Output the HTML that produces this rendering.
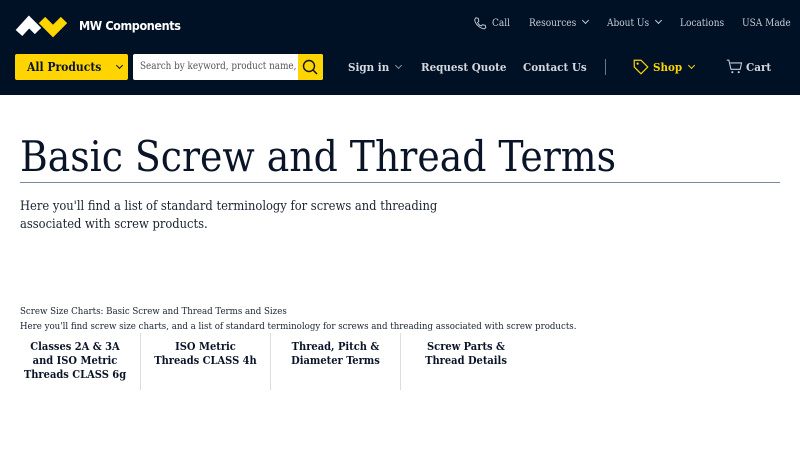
<!DOCTYPE html>
<html><head><meta charset="utf-8"><style>
*{margin:0;padding:0;box-sizing:border-box}
body{width:800px;height:450px;overflow:hidden;background:#fff;font-family:"DejaVu Serif",serif;font-stretch:condensed;color:#0a1428}
.hdr{position:absolute;left:0;top:0;width:800px;height:95px;background:#001025}
.t{position:absolute;white-space:nowrap}
.top{color:#c9ced6;font-size:10px;top:18px}
.nav{color:#d5d9df;font-size:11.5px;font-weight:bold;top:60px}
.chev{display:inline-block;width:5px;height:5px;border-right:1px solid currentColor;border-bottom:1px solid currentColor;transform:rotate(45deg);margin-left:7px;position:relative;top:-3px}
</style></head><body>
<div class="hdr">
<svg class="t" style="left:0;top:0" width="80" height="45"><polyline points="19,33 29,22 38,31" fill="none" stroke="#fff" stroke-width="9" stroke-linejoin="miter"/><polyline points="42,20 53,31 64,20" fill="none" stroke="#ffd500" stroke-width="9"/></svg>
<div class="t" style="left:79px;top:18px;color:#fff;font-family:'DejaVu Sans',sans-serif;font-weight:bold;font-size:12.5px;letter-spacing:-0.4px">MW Components</div>
<svg class="t" style="left:473px;top:16px" width="14" height="14" viewBox="0 0 24 24"><path d="M5 3l4 1 1 5-2 2c1 3 3 5 6 6l2-2 5 1 1 4-3 2C11 21 3 13 3 6z" fill="none" stroke="#c9ced6" stroke-width="1.6"/></svg>
<div class="t top" style="left:492px">Call</div>
<div class="t top" style="left:529px">Resources<span class="chev"></span></div>
<div class="t top" style="left:607px">About Us<span class="chev"></span></div>
<div class="t top" style="left:680px">Locations</div>
<div class="t top" style="left:742px">USA Made</div>
<div class="t" style="left:15px;top:54px;width:113px;height:26px;background:#ffd500;border-radius:2px;font-weight:bold;font-size:12px;color:#0a1428;padding:6px 0 0 12px">All Products<span class="chev" style="margin-left:16px"></span></div>
<div class="t" style="left:133px;top:54px;width:190px;height:26px;background:#fff;border-radius:2px;overflow:hidden;font-size:9.8px;color:#555;padding:7px 0 0 7px">Search by keyword, product name, c</div>
<div class="t" style="left:298px;top:54px;width:25px;height:26px;background:#ffd500;border-radius:0 2px 2px 0"><svg width="25" height="26"><circle cx="11" cy="12" r="5.5" fill="none" stroke="#0a1428" stroke-width="1.4"/><line x1="15" y1="16" x2="19" y2="20" stroke="#0a1428" stroke-width="1.5"/></svg></div>
<div class="t nav" style="left:348px">Sign in<span class="chev" style="color:#8a93a0"></span></div>
<div class="t nav" style="left:421px">Request Quote</div>
<div class="t nav" style="left:523px">Contact Us</div>
<div class="t" style="left:605px;top:59px;width:1px;height:16px;background:#6b7585"></div>
<svg class="t" style="left:632px;top:58px" width="18" height="18" viewBox="0 0 24 24"><path d="M3 3h9l9 9-9 9-9-9z" fill="none" stroke="#ffd500" stroke-width="1.6"/><circle cx="7.5" cy="7.5" r="1.5" fill="#ffd500"/></svg>
<div class="t nav" style="left:653px;color:#ffd500">Shop<span class="chev"></span></div>
<svg class="t" style="left:726px;top:58px" width="17" height="17" viewBox="0 0 24 24"><path d="M1 3h3l3 13h13l2-9H6" fill="none" stroke="#c9ced6" stroke-width="1.5"/><circle cx="9" cy="20" r="1.5" fill="#c9ced6"/><circle cx="18" cy="20" r="1.5" fill="#c9ced6"/></svg>
<div class="t nav" style="left:746px">Cart</div>
</div>
<div class="t" style="left:20px;top:132px;font-size:42px;color:#0a1428">Basic Screw and Thread Terms</div>
<div class="t" style="left:20px;top:182px;width:760px;height:1px;background:#7d8a9b"></div>
<div class="t" style="left:20px;top:198px;font-size:12.8px;line-height:18px;color:#1a2233">Here you'll find a list of standard terminology for screws and threading<br>associated with screw products.</div>
<div class="t" style="left:20px;top:304px;font-size:9.6px;line-height:15px;color:#1a2233">Screw Size Charts: Basic Screw and Thread Terms and Sizes<br>Here you'll find screw size charts, and a list of standard terminology for screws and threading associated with screw products.</div>
<div class="t" style="left:10px;top:333px;display:flex;font-weight:bold;font-size:11px;line-height:14px;text-align:center;color:#0a1428">
<div style="width:131px;height:57px;padding-top:7px;border-right:1px solid #ddd">Classes 2A &amp; 3A<br>and ISO Metric<br>Threads CLASS 6g</div>
<div style="width:130px;height:57px;padding-top:7px;border-right:1px solid #ddd">ISO Metric<br>Threads CLASS 4h</div>
<div style="width:130px;height:57px;padding-top:7px;border-right:1px solid #ddd">Thread, Pitch &amp;<br>Diameter Terms</div>
<div style="width:130px;height:57px;padding-top:7px">Screw Parts &amp;<br>Thread Details</div>
</div>
</body></html>
